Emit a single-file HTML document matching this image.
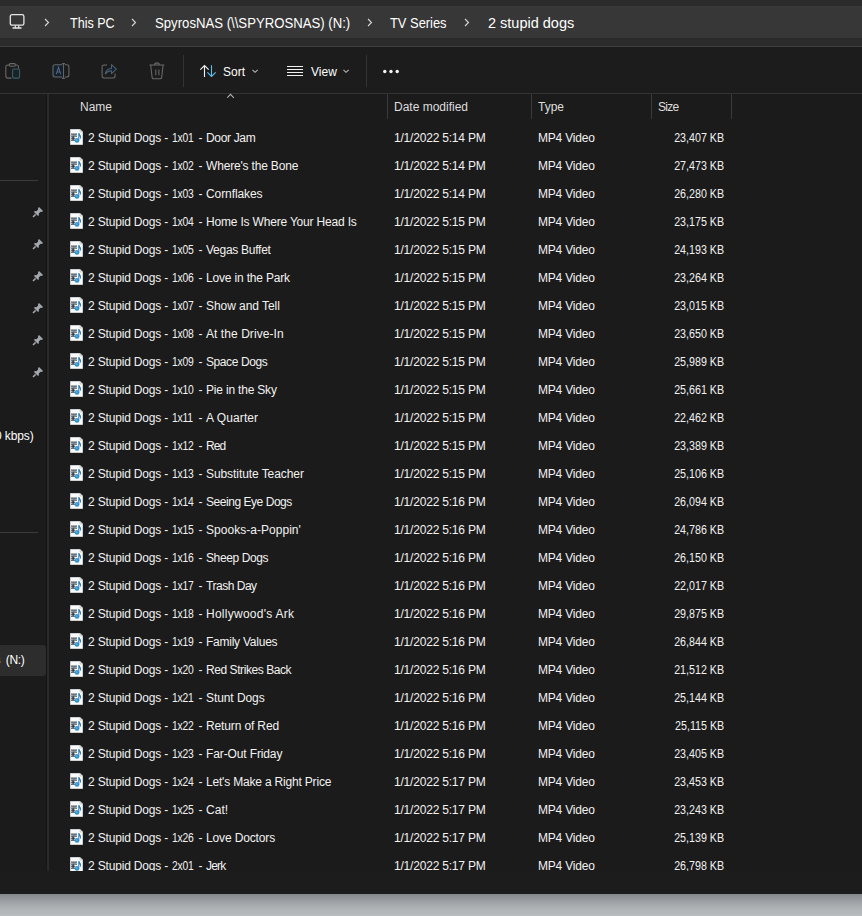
<!DOCTYPE html>
<html><head><meta charset="utf-8">
<style>
*{box-sizing:border-box;margin:0;padding:0}
html,body{width:862px;height:916px;overflow:hidden;background:#1b1b1b;font-family:"Liberation Sans",sans-serif;color:#fff;position:relative}
.abs{position:absolute}
#topband{position:absolute;left:0;top:0;width:862px;height:6px;background:#2b2b2b}
#crumb{position:absolute;left:0;top:6px;width:862px;height:32px;background:#373737}
#band2{position:absolute;left:0;top:38px;width:862px;height:8px;background:#2b2b2b}
#line1{position:absolute;left:0;top:46px;width:862px;height:1px;background:#3d3d3d}
#toolbar{position:absolute;left:0;top:47px;width:862px;height:46px;background:#1c1c1c}
#line2{position:absolute;left:0;top:93px;width:862px;height:1px;background:#333}
.ct{position:absolute;top:7px;transform-origin:0 50%;height:32px;line-height:32px;font-size:14px;color:#fff;white-space:pre}
.chev{position:absolute;top:18px}
.tb{position:absolute}
.tbt{position:absolute;top:49px;height:46px;line-height:46px;font-size:12px;color:#fff}
.vsep{position:absolute;width:1px;background:#333}
#nav{position:absolute;left:0;top:94px;width:46px;height:777px;background:#1b1b1b}
#div1{position:absolute;left:46px;top:94px;width:1px;height:777px;background:#151515}
#div2{position:absolute;left:47px;top:94px;width:2px;height:777px;background:#2a2a2a}
.hline{position:absolute;left:0;width:38px;height:1px;background:#3a3a3a}
.pin{position:absolute;left:32px}
.hd{position:absolute;top:95px;height:24px;line-height:24px;font-size:12px;color:#dedede;white-space:pre}
.csep{position:absolute;top:94px;width:1px;height:25px;background:#3a3a3a}
.row{position:absolute;left:0;width:862px;height:28px;font-size:12px;line-height:28px;white-space:pre;color:#f2f2f2}
.row span{position:absolute;top:0}
.fi{position:absolute;left:69px;top:5px}
.nm{left:88px;letter-spacing:-0.17px}
.tt{left:206px}
.ep{left:171.5px;transform:scaleX(0.86);transform-origin:0 50%;letter-spacing:-0.2px}
.hy{left:198.5px}
.dt{left:394px;letter-spacing:-0.2px}
.ty{left:538px;letter-spacing:-0.2px}
.sz{right:138px;transform:scaleX(0.89);transform-origin:100% 50%}
#status{position:absolute;left:0;top:871px;width:862px;height:23px;background:#1c1c1c}
#desk{position:absolute;left:0;top:894px;width:862px;height:22px;background:linear-gradient(#84888b,#9a9ea2 30%,#acb0b3 60%,#b9bdc0)}
</style></head><body>
<svg width="0" height="0" style="position:absolute">
<defs>
<symbol id="fileico" viewBox="0 0 16 16">
<path d="M1.5 0.5h9.5l2.5 2.5v12.5h-12z" fill="#f8fafb" stroke="#cdd1d4" stroke-width="1"/>
<path d="M11 0.5v2.5h2.5" fill="#e4e8ea" stroke="#c4c8cb" stroke-width="0.8"/>
<rect x="3.3" y="5.4" width="3.4" height="1.4" fill="#b8b6d2"/>
<rect x="3.3" y="7.4" width="1.7" height="3.4" fill="#3c4c58"/>
<rect x="2" y="4.6" width="6" height="1" fill="#2b3338"/>
<rect x="2" y="6.6" width="6" height="1" fill="#2b3338"/>
<rect x="2" y="8.7" width="4" height="1" fill="#2b3338"/>
<rect x="2" y="10.7" width="4" height="1" fill="#2b3338"/>
<path d="M9.3 4 L10.3 4 Q12.6 6.5 12 10 L11.2 9.6 Q11.3 8 10.3 7 L10.3 11.5 L9.3 11.5 Z" fill="#2a7fb8"/>
<ellipse cx="8" cy="11.4" rx="2.3" ry="2.3" fill="#2b90d2"/>
<ellipse cx="7.6" cy="11" rx="1" ry="0.9" fill="#5ab4e6"/>
</symbol>
<symbol id="pinico" viewBox="0 0 12 12">
<path d="M7 1 L11 5 L9.8 6 L8.5 5.8 L6.8 7.6 L6.9 9.2 L6 10 L2 6 L2.8 5.1 L4.4 5.2 L6.2 3.5 L6 2.2 Z" fill="#a3a8ae"/>
<path d="M3.6 8.4 L1 11" stroke="#a3a8ae" stroke-width="1.5"/>
</symbol>
</defs></svg>

<div id="topband"></div>
<div id="crumb"></div>
<div id="band2"></div>
<div id="line1"></div>
<div id="toolbar"></div>
<div id="line2"></div>

<!-- breadcrumb -->
<svg class="abs" style="left:9px;top:13px" width="16" height="16" viewBox="0 0 16 16"><rect x="1.3" y="1.6" width="13.6" height="10.6" rx="1.8" fill="none" stroke="#e6e6e6" stroke-width="1.3"/><path d="M6.3 12.5v1.8M9.7 12.5v1.8M3.5 15h9" stroke="#e6e6e6" stroke-width="1.3"/></svg>
<svg class="chev" style="left:44px" width="6" height="9" viewBox="0 0 6 9"><path d="M1 1l3.5 3.5L1 8" fill="none" stroke="#d8d8d8" stroke-width="1.1"/></svg>
<span class="ct" style="left:70px;transform:scaleX(0.896)">This PC</span>
<svg class="chev" style="left:131px" width="6" height="9" viewBox="0 0 6 9"><path d="M1 1l3.5 3.5L1 8" fill="none" stroke="#d8d8d8" stroke-width="1.1"/></svg>
<span class="ct" style="left:155px;transform:scaleX(0.94)">SpyrosNAS (\\SPYROSNAS) (N:)</span>
<svg class="chev" style="left:367px" width="6" height="9" viewBox="0 0 6 9"><path d="M1 1l3.5 3.5L1 8" fill="none" stroke="#d8d8d8" stroke-width="1.1"/></svg>
<span class="ct" style="left:390px;transform:scaleX(0.92)">TV Series</span>
<svg class="chev" style="left:464px" width="6" height="9" viewBox="0 0 6 9"><path d="M1 1l3.5 3.5L1 8" fill="none" stroke="#d8d8d8" stroke-width="1.1"/></svg>
<span class="ct" style="left:488px;transform:scaleX(1.035)">2 stupid dogs</span>

<!-- toolbar -->
<svg class="tb" style="left:5px;top:62px" width="18" height="18" viewBox="0 0 18 18"><path d="M6.5 16.1H2.8a2 2 0 0 1-2-2V5a2 2 0 0 1 2-2h1.2M10.6 3h1a2 2 0 0 1 1.9 1.8V6.5" fill="none" stroke="#6a6a6a" stroke-width="1.05"/><rect x="4.2" y="1.6" width="6.2" height="2.6" rx="1.2" fill="none" stroke="#6a6a6a" stroke-width="1.05"/><rect x="7.6" y="7" width="7" height="9.1" rx="1.3" fill="#192326" stroke="#3b6067" stroke-width="1.05"/></svg>
<svg class="tb" style="left:52px;top:62px" width="18" height="18" viewBox="0 0 18 18"><path d="M10.3 2.8H3a2 2 0 0 0-2 2v8.1a2 2 0 0 0 2 2h7.3z" fill="#142131" stroke="none"/><path d="M10.3 2.8H3a2 2 0 0 0-2 2v8.1a2 2 0 0 0 2 2h7.3M12.7 2.8h2.2a2 2 0 0 1 2 2v8.1a2 2 0 0 1-2 2h-2.2" fill="none" stroke="#6a6a6a" stroke-width="1.05"/><path d="M11.5 1.4v15M10 1.4h3M10 16.4h3" stroke="#5b6670" stroke-width="1.05"/><path d="M4.3 12.2L6.5 5.3L8.7 12.2M5.1 10h2.8" fill="none" stroke="#56687a" stroke-width="1.05"/></svg>
<svg class="tb" style="left:101px;top:62px" width="18" height="18" viewBox="0 0 18 18"><path d="M6 2.9H3.1a2 2 0 0 0-2 2V13.9a2 2 0 0 0 2 2H12.1a2 2 0 0 0 2-2V11.5" fill="none" stroke="#6a6a6a" stroke-width="1.05"/><path d="M4.3 11.8C5 8.5 7.5 6.5 10.5 6.5V2.6L15.4 7.2L10.5 11.6V8.8C8 8.8 6 9.8 4.3 11.8Z" fill="#142131" stroke="#4d6170" stroke-width="1.05" stroke-linejoin="round"/></svg>
<svg class="tb" style="left:148px;top:62px" width="18" height="18" viewBox="0 0 18 18"><path d="M1.5 3h14.8M6.6 3V2.3a1.2 1.2 0 0 1 1.2-1.2h2.2a1.2 1.2 0 0 1 1.2 1.2V3M2.7 3l1.4 12.4a1.6 1.6 0 0 0 1.6 1.4h6.4a1.6 1.6 0 0 0 1.6-1.4L15.1 3M7.8 7.4v5.8M10.9 7.4v5.8" fill="none" stroke="#6a6a6a" stroke-width="1.05"/></svg>
<div class="vsep" style="left:183px;top:55px;height:32px"></div>
<svg class="tb" style="left:195px;top:60px" width="30" height="22" viewBox="0 0 30 22"><path d="M9.5 5.3V17M5.3 9.7L9.5 5.5L13.7 9.7" fill="none" stroke="#f2f2f2" stroke-width="1.1"/><path d="M16.5 5.3V16.8M12.4 12.3L16.5 16.5L20.7 12.3" fill="none" stroke="#5cbdf0" stroke-width="1.1"/></svg>
<span class="tbt" style="left:223px">Sort</span>
<svg class="tb" style="left:250px;top:67px" width="10" height="8" viewBox="0 0 10 8"><path d="M2.5 2.8L5 5.3L7.7 2.8" fill="none" stroke="#b8b8b8" stroke-width="1.1"/></svg>
<svg class="tb" style="left:287px;top:60px" width="16" height="20" viewBox="0 0 16 20"><path d="M0 6.5h16M0 9.5h16M0 12.5h16M0 15.5h16" stroke="#f0f0f0" stroke-width="1"/></svg>
<span class="tbt" style="left:311px">View</span>
<svg class="tb" style="left:341px;top:67px" width="10" height="8" viewBox="0 0 10 8"><path d="M2.5 2.8L5 5.3L7.7 2.8" fill="none" stroke="#b8b8b8" stroke-width="1.1"/></svg>
<div class="vsep" style="left:366px;top:55px;height:32px"></div>
<svg class="tb" style="left:378px;top:64px" width="26" height="16" viewBox="0 0 26 16"><circle cx="6.8" cy="7.5" r="1.7" fill="#f4f4f4"/><circle cx="13" cy="7.5" r="1.7" fill="#f4f4f4"/><circle cx="19.2" cy="7.5" r="1.7" fill="#f4f4f4"/></svg>

<!-- nav pane -->
<div id="div1"></div>
<div id="div2"></div>
<div class="hline" style="top:180px"></div>
<div class="hline" style="top:532px"></div>
<svg class="pin" style="top:206px" width="12" height="12" viewBox="0 0 12 12"><use href="#pinico"/></svg><svg class="pin" style="top:238px" width="12" height="12" viewBox="0 0 12 12"><use href="#pinico"/></svg><svg class="pin" style="top:270px" width="12" height="12" viewBox="0 0 12 12"><use href="#pinico"/></svg><svg class="pin" style="top:302px" width="12" height="12" viewBox="0 0 12 12"><use href="#pinico"/></svg><svg class="pin" style="top:334px" width="12" height="12" viewBox="0 0 12 12"><use href="#pinico"/></svg><svg class="pin" style="top:366px" width="12" height="12" viewBox="0 0 12 12"><use href="#pinico"/></svg>
<span class="abs" style="left:-5px;top:428px;font-size:12px;line-height:16px;white-space:pre;letter-spacing:-0.1px">0 kbps)</span>
<div class="abs" style="left:0;top:645px;width:46px;height:31px;background:#2d2d2d;border-radius:0 3px 3px 0"></div>
<span class="abs" style="left:-5.5px;top:652px;font-size:12px;line-height:16px;white-space:pre">s</span><span class="abs" style="left:5.7px;top:652px;font-size:12px;line-height:16px;white-space:pre;letter-spacing:-0.3px">(N:)</span>

<!-- header -->
<svg class="abs" style="left:220px;top:88px" width="22" height="16" viewBox="0 0 22 16"><path d="M7.3 9.7L10.5 6.4L13.9 9.8" fill="none" stroke="#b0b0b0" stroke-width="1.1"/></svg>
<span class="hd" style="left:80px">Name</span>
<div class="csep" style="left:387px"></div>
<span class="hd" style="left:394px">Date modified</span>
<div class="csep" style="left:531px"></div>
<span class="hd" style="left:538px">Type</span>
<div class="csep" style="left:651px"></div>
<span class="hd" style="left:658px;letter-spacing:-0.7px">Size</span>
<div class="csep" style="left:731px"></div>

<div id="rows" style="position:absolute;left:0;top:0;width:862px;height:871px;overflow:hidden">
<div class="row" style="top:124px"><svg class="fi" width="16" height="16" viewBox="0 0 16 16"><use href="#fileico"/></svg><span class="nm">2 Stupid Dogs -</span><span class="ep">1x01</span><span class="hy">-</span><span class="tt" style="letter-spacing:-0.329px">Door Jam</span><span class="dt">1/1/2022 5:14 PM</span><span class="ty">MP4 Video</span><span class="sz">23,407 KB</span></div>
<div class="row" style="top:152px"><svg class="fi" width="16" height="16" viewBox="0 0 16 16"><use href="#fileico"/></svg><span class="nm">2 Stupid Dogs -</span><span class="ep">1x02</span><span class="hy">-</span><span class="tt" style="letter-spacing:-0.18px">Where&#x27;s the Bone</span><span class="dt">1/1/2022 5:14 PM</span><span class="ty">MP4 Video</span><span class="sz">27,473 KB</span></div>
<div class="row" style="top:180px"><svg class="fi" width="16" height="16" viewBox="0 0 16 16"><use href="#fileico"/></svg><span class="nm">2 Stupid Dogs -</span><span class="ep">1x03</span><span class="hy">-</span><span class="tt" style="letter-spacing:-0.089px">Cornflakes</span><span class="dt">1/1/2022 5:14 PM</span><span class="ty">MP4 Video</span><span class="sz">26,280 KB</span></div>
<div class="row" style="top:208px"><svg class="fi" width="16" height="16" viewBox="0 0 16 16"><use href="#fileico"/></svg><span class="nm">2 Stupid Dogs -</span><span class="ep">1x04</span><span class="hy">-</span><span class="tt" style="letter-spacing:-0.184px">Home Is Where Your Head Is</span><span class="dt">1/1/2022 5:15 PM</span><span class="ty">MP4 Video</span><span class="sz">23,175 KB</span></div>
<div class="row" style="top:236px"><svg class="fi" width="16" height="16" viewBox="0 0 16 16"><use href="#fileico"/></svg><span class="nm">2 Stupid Dogs -</span><span class="ep">1x05</span><span class="hy">-</span><span class="tt" style="letter-spacing:-0.264px">Vegas Buffet</span><span class="dt">1/1/2022 5:15 PM</span><span class="ty">MP4 Video</span><span class="sz">24,193 KB</span></div>
<div class="row" style="top:264px"><svg class="fi" width="16" height="16" viewBox="0 0 16 16"><use href="#fileico"/></svg><span class="nm">2 Stupid Dogs -</span><span class="ep">1x06</span><span class="hy">-</span><span class="tt" style="letter-spacing:-0.173px">Love in the Park</span><span class="dt">1/1/2022 5:15 PM</span><span class="ty">MP4 Video</span><span class="sz">23,264 KB</span></div>
<div class="row" style="top:292px"><svg class="fi" width="16" height="16" viewBox="0 0 16 16"><use href="#fileico"/></svg><span class="nm">2 Stupid Dogs -</span><span class="ep">1x07</span><span class="hy">-</span><span class="tt" style="letter-spacing:-0.058px">Show and Tell</span><span class="dt">1/1/2022 5:15 PM</span><span class="ty">MP4 Video</span><span class="sz">23,015 KB</span></div>
<div class="row" style="top:320px"><svg class="fi" width="16" height="16" viewBox="0 0 16 16"><use href="#fileico"/></svg><span class="nm">2 Stupid Dogs -</span><span class="ep">1x08</span><span class="hy">-</span><span class="tt" style="letter-spacing:0.064px">At the Drive-In</span><span class="dt">1/1/2022 5:15 PM</span><span class="ty">MP4 Video</span><span class="sz">23,650 KB</span></div>
<div class="row" style="top:348px"><svg class="fi" width="16" height="16" viewBox="0 0 16 16"><use href="#fileico"/></svg><span class="nm">2 Stupid Dogs -</span><span class="ep">1x09</span><span class="hy">-</span><span class="tt" style="letter-spacing:-0.411px">Space Dogs</span><span class="dt">1/1/2022 5:15 PM</span><span class="ty">MP4 Video</span><span class="sz">25,989 KB</span></div>
<div class="row" style="top:376px"><svg class="fi" width="16" height="16" viewBox="0 0 16 16"><use href="#fileico"/></svg><span class="nm">2 Stupid Dogs -</span><span class="ep">1x10</span><span class="hy">-</span><span class="tt" style="letter-spacing:-0.192px">Pie in the Sky</span><span class="dt">1/1/2022 5:15 PM</span><span class="ty">MP4 Video</span><span class="sz">25,661 KB</span></div>
<div class="row" style="top:404px"><svg class="fi" width="16" height="16" viewBox="0 0 16 16"><use href="#fileico"/></svg><span class="nm">2 Stupid Dogs -</span><span class="ep">1x11</span><span class="hy">-</span><span class="tt" style="letter-spacing:0.087px">A Quarter</span><span class="dt">1/1/2022 5:15 PM</span><span class="ty">MP4 Video</span><span class="sz">22,462 KB</span></div>
<div class="row" style="top:432px"><svg class="fi" width="16" height="16" viewBox="0 0 16 16"><use href="#fileico"/></svg><span class="nm">2 Stupid Dogs -</span><span class="ep">1x12</span><span class="hy">-</span><span class="tt" style="letter-spacing:-0.9px">Red</span><span class="dt">1/1/2022 5:15 PM</span><span class="ty">MP4 Video</span><span class="sz">23,389 KB</span></div>
<div class="row" style="top:460px"><svg class="fi" width="16" height="16" viewBox="0 0 16 16"><use href="#fileico"/></svg><span class="nm">2 Stupid Dogs -</span><span class="ep">1x13</span><span class="hy">-</span><span class="tt" style="letter-spacing:-0.076px">Substitute Teacher</span><span class="dt">1/1/2022 5:15 PM</span><span class="ty">MP4 Video</span><span class="sz">25,106 KB</span></div>
<div class="row" style="top:488px"><svg class="fi" width="16" height="16" viewBox="0 0 16 16"><use href="#fileico"/></svg><span class="nm">2 Stupid Dogs -</span><span class="ep">1x14</span><span class="hy">-</span><span class="tt" style="letter-spacing:-0.457px">Seeing Eye Dogs</span><span class="dt">1/1/2022 5:16 PM</span><span class="ty">MP4 Video</span><span class="sz">26,094 KB</span></div>
<div class="row" style="top:516px"><svg class="fi" width="16" height="16" viewBox="0 0 16 16"><use href="#fileico"/></svg><span class="nm">2 Stupid Dogs -</span><span class="ep">1x15</span><span class="hy">-</span><span class="tt" style="letter-spacing:0.033px">Spooks-a-Poppin&#x27;</span><span class="dt">1/1/2022 5:16 PM</span><span class="ty">MP4 Video</span><span class="sz">24,786 KB</span></div>
<div class="row" style="top:544px"><svg class="fi" width="16" height="16" viewBox="0 0 16 16"><use href="#fileico"/></svg><span class="nm">2 Stupid Dogs -</span><span class="ep">1x16</span><span class="hy">-</span><span class="tt" style="letter-spacing:-0.4px">Sheep Dogs</span><span class="dt">1/1/2022 5:16 PM</span><span class="ty">MP4 Video</span><span class="sz">26,150 KB</span></div>
<div class="row" style="top:572px"><svg class="fi" width="16" height="16" viewBox="0 0 16 16"><use href="#fileico"/></svg><span class="nm">2 Stupid Dogs -</span><span class="ep">1x17</span><span class="hy">-</span><span class="tt" style="letter-spacing:-0.475px">Trash Day</span><span class="dt">1/1/2022 5:16 PM</span><span class="ty">MP4 Video</span><span class="sz">22,017 KB</span></div>
<div class="row" style="top:600px"><svg class="fi" width="16" height="16" viewBox="0 0 16 16"><use href="#fileico"/></svg><span class="nm">2 Stupid Dogs -</span><span class="ep">1x18</span><span class="hy">-</span><span class="tt" style="letter-spacing:0.257px">Hollywood&#x27;s Ark</span><span class="dt">1/1/2022 5:16 PM</span><span class="ty">MP4 Video</span><span class="sz">29,875 KB</span></div>
<div class="row" style="top:628px"><svg class="fi" width="16" height="16" viewBox="0 0 16 16"><use href="#fileico"/></svg><span class="nm">2 Stupid Dogs -</span><span class="ep">1x19</span><span class="hy">-</span><span class="tt" style="letter-spacing:-0.242px">Family Values</span><span class="dt">1/1/2022 5:16 PM</span><span class="ty">MP4 Video</span><span class="sz">26,844 KB</span></div>
<div class="row" style="top:656px"><svg class="fi" width="16" height="16" viewBox="0 0 16 16"><use href="#fileico"/></svg><span class="nm">2 Stupid Dogs -</span><span class="ep">1x20</span><span class="hy">-</span><span class="tt" style="letter-spacing:-0.433px">Red Strikes Back</span><span class="dt">1/1/2022 5:16 PM</span><span class="ty">MP4 Video</span><span class="sz">21,512 KB</span></div>
<div class="row" style="top:684px"><svg class="fi" width="16" height="16" viewBox="0 0 16 16"><use href="#fileico"/></svg><span class="nm">2 Stupid Dogs -</span><span class="ep">1x21</span><span class="hy">-</span><span class="tt" style="letter-spacing:-0.078px">Stunt Dogs</span><span class="dt">1/1/2022 5:16 PM</span><span class="ty">MP4 Video</span><span class="sz">25,144 KB</span></div>
<div class="row" style="top:712px"><svg class="fi" width="16" height="16" viewBox="0 0 16 16"><use href="#fileico"/></svg><span class="nm">2 Stupid Dogs -</span><span class="ep">1x22</span><span class="hy">-</span><span class="tt" style="letter-spacing:-0.133px">Return of Red</span><span class="dt">1/1/2022 5:16 PM</span><span class="ty">MP4 Video</span><span class="sz">25,115 KB</span></div>
<div class="row" style="top:740px"><svg class="fi" width="16" height="16" viewBox="0 0 16 16"><use href="#fileico"/></svg><span class="nm">2 Stupid Dogs -</span><span class="ep">1x23</span><span class="hy">-</span><span class="tt" style="letter-spacing:-0.123px">Far-Out Friday</span><span class="dt">1/1/2022 5:16 PM</span><span class="ty">MP4 Video</span><span class="sz">23,405 KB</span></div>
<div class="row" style="top:768px"><svg class="fi" width="16" height="16" viewBox="0 0 16 16"><use href="#fileico"/></svg><span class="nm">2 Stupid Dogs -</span><span class="ep">1x24</span><span class="hy">-</span><span class="tt" style="letter-spacing:-0.187px">Let&#x27;s Make a Right Price</span><span class="dt">1/1/2022 5:17 PM</span><span class="ty">MP4 Video</span><span class="sz">23,453 KB</span></div>
<div class="row" style="top:796px"><svg class="fi" width="16" height="16" viewBox="0 0 16 16"><use href="#fileico"/></svg><span class="nm">2 Stupid Dogs -</span><span class="ep">1x25</span><span class="hy">-</span><span class="tt" style="letter-spacing:0.033px">Cat!</span><span class="dt">1/1/2022 5:17 PM</span><span class="ty">MP4 Video</span><span class="sz">23,243 KB</span></div>
<div class="row" style="top:824px"><svg class="fi" width="16" height="16" viewBox="0 0 16 16"><use href="#fileico"/></svg><span class="nm">2 Stupid Dogs -</span><span class="ep">1x26</span><span class="hy">-</span><span class="tt" style="letter-spacing:-0.136px">Love Doctors</span><span class="dt">1/1/2022 5:17 PM</span><span class="ty">MP4 Video</span><span class="sz">25,139 KB</span></div>
<div class="row" style="top:852px"><svg class="fi" width="16" height="16" viewBox="0 0 16 16"><use href="#fileico"/></svg><span class="nm">2 Stupid Dogs -</span><span class="ep">2x01</span><span class="hy">-</span><span class="tt" style="letter-spacing:-0.833px">Jerk</span><span class="dt">1/1/2022 5:17 PM</span><span class="ty">MP4 Video</span><span class="sz">26,798 KB</span></div>
</div>

<div id="status"></div>
<div id="desk"></div>
</body></html>
